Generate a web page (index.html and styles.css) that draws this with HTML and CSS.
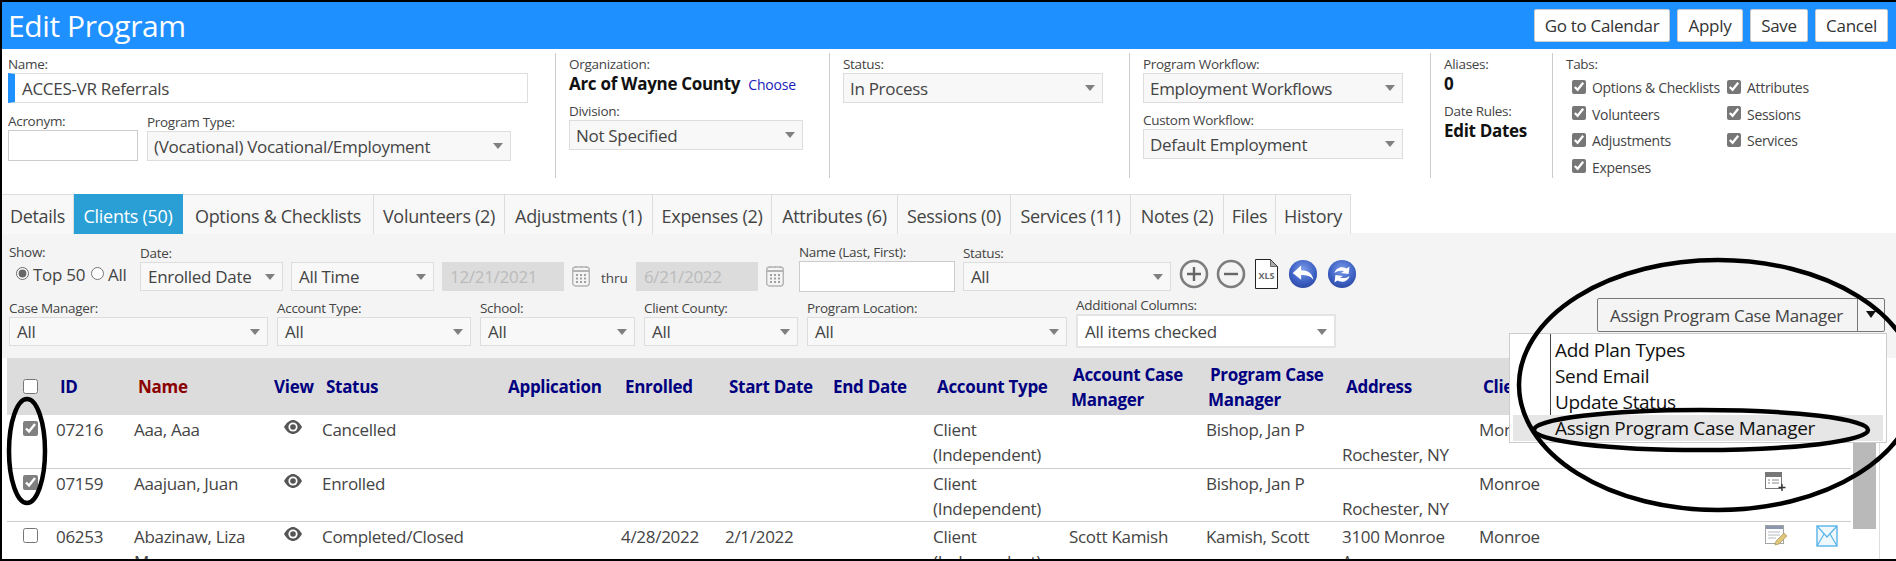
FILE: index.html
```html
<!DOCTYPE html>
<html lang="en">
<head>
    <meta charset="UTF-8">
    <title>Edit Program</title>
    <link rel="stylesheet" href="styles.css">
</head>
<body>
    <svg class="defs" width="0" height="0">
        <symbol id="eye" viewBox="0 0 18 14">
            <path d="M0 7C3 2 6 0 9 0s6 2 9 7c-3 5-6 7-9 7s-6-2-9-7z" fill="#555"/>
            <circle cx="9" cy="7" r="4.6" fill="#fff"/>
            <circle cx="9" cy="7" r="2.8" fill="#555"/>
        </symbol>
        <symbol id="calendar" viewBox="0 0 18 22">
            <rect x="0.7" y="2" width="16.6" height="19" rx="3" fill="#f4f4f4" stroke="#b4b4b4" stroke-width="1.4"/>
            <path d="M1 6h16" stroke="#b4b4b4" stroke-width="2"/>
            <path d="M4 1v2M9 1v2M14 1v2" stroke="#b4b4b4" stroke-width="1.4"/>
            <path d="M4 10h2M8 10h2M12 10h2M4 13.500h2M8 13.500h2M12 13.500h2M4 17h2M8 17h2M12 17h2" stroke="#a0a0a0" stroke-width="2"/>
        </symbol>
    </svg>

    <div class="frame">
        <div class="title-bar">
            <h1>Edit Program</h1>
            <div class="title-buttons">
                <button class="btn-calendar">Go to Calendar</button>
                <button class="btn-apply">Apply</button>
                <button class="btn-save">Save</button>
                <button class="btn-cancel">Cancel</button>
            </div>
        </div>

        <!-- Program fields -->
        <div class="program-form">
            <div class="section sec-name">
                <label>Name:</label>
                <div class="name-input">ACCES-VR Referrals</div>
                <div class="name-row">
                    <div class="acronym">
                        <label>Acronym:</label>
                        <input type="text" class="text-input acronym-input">
                    </div>
                    <div class="program-type">
                        <label>Program Type:</label>
                        <div class="select">(Vocational) Vocational/Employment</div>
                    </div>
                </div>
            </div>
            <div class="section sec-org">
                <label>Organization:</label>
                <div class="strong-value">Arc of Wayne County <a href="#" class="choose">Choose</a></div>
                <label class="second-label">Division:</label>
                <div class="select">Not Specified</div>
            </div>
            <div class="section sec-status">
                <label>Status:</label>
                <div class="select">In Process</div>
            </div>
            <div class="section sec-workflow">
                <label>Program Workflow:</label>
                <div class="select">Employment Workflows</div>
                <label class="custom-label">Custom Workflow:</label>
                <div class="select">Default Employment</div>
            </div>
            <div class="section sec-alias">
                <label>Aliases:</label>
                <div class="strong-value">0</div>
                <label class="second-label">Date Rules:</label>
                <div class="strong-value">Edit Dates</div>
            </div>
            <div class="section sec-tabs">
                <label>Tabs:</label>
                <div class="tab-checks">
                    <label class="check"><input type="checkbox" checked>Options &amp; Checklists</label>
                    <label class="check"><input type="checkbox" checked>Attributes</label>
                    <label class="check"><input type="checkbox" checked>Volunteers</label>
                    <label class="check"><input type="checkbox" checked>Sessions</label>
                    <label class="check"><input type="checkbox" checked>Adjustments</label>
                    <label class="check"><input type="checkbox" checked>Services</label>
                    <label class="check"><input type="checkbox" checked>Expenses</label>
                </div>
            </div>
        </div>

        <div class="tabs">
            <a href="#">Details</a>
            <a href="#" class="active">Clients (50)</a>
            <a href="#">Options &amp; Checklists</a>
            <a href="#">Volunteers (2)</a>
            <a href="#">Adjustments (1)</a>
            <a href="#">Expenses (2)</a>
            <a href="#">Attributes (6)</a>
            <a href="#">Sessions (0)</a>
            <a href="#">Services (11)</a>
            <a href="#">Notes (2)</a>
            <a href="#">Files</a>
            <a href="#">History</a>
        </div>

        <!-- Filters -->
        <div class="filters">
            <div class="filter-row">
                <div class="show-field">
                    <label>Show:</label>
                    <div class="radios">
                        <input type="radio" name="show" checked><span>Top 50</span>
                        <input type="radio" name="show"><span>All</span>
                    </div>
                </div>
                <div class="field w-date"><label>Date:</label><div class="select">Enrolled Date</div></div>
                <div class="field w-date"><label>&nbsp;</label><div class="select">All Time</div></div>
                <div class="date-box first">12/21/2021</div>
                <svg class="cal-icon"><use href="#calendar"></use></svg>
                <span class="thru">thru</span>
                <div class="date-box">6/21/2022</div>
                <svg class="cal-icon"><use href="#calendar"></use></svg>
                <div class="field w-lastname"><label>Name (Last, First):</label><input type="text" class="text-input filter-input"></div>
                <div class="field w-status"><label>Status:</label><div class="select">All</div></div>
                <div class="tool-icons">
                    <svg width="30" height="30" viewBox="0 0 30 30"><circle cx="15" cy="15" r="13" fill="none" stroke="#7d7d7d" stroke-width="2.600"/><path d="M15 8v14M8 15h14" stroke="#666" stroke-width="2.400"/></svg>
                    <svg width="30" height="30" viewBox="0 0 30 30"><circle cx="15" cy="15" r="13" fill="none" stroke="#7d7d7d" stroke-width="2.600"/><path d="M8 15h14" stroke="#666" stroke-width="2.400"/></svg>
                    <svg class="xls" width="23" height="30" viewBox="0 0 23 30">
                        <path d="M.5.5h15l7 7v22H.5z" fill="#fff" stroke="#222"/>
                        <path d="M15.500.5v7h7z" fill="#aaa" stroke="#222" stroke-width=".6"/>
                        <text x="11.500" y="19.500" text-anchor="middle" class="xls-text">XLS</text>
                    </svg>
                    <svg width="32" height="30" viewBox="0 0 32 32">
                        <defs>
                            <radialGradient id="globe" cx=".5" cy=".35" r=".7"><stop offset="0" stop-color="#7d9ce8"/><stop offset=".6" stop-color="#3f63c6"/><stop offset="1" stop-color="#2b45a0"/></radialGradient>
                        </defs>
                        <circle cx="16" cy="16" r="15" fill="url(#globe)"/>
                        <path d="M5 15l9-8v5c7 0 12 3 13 10-3-4-7-5-13-5v5z" fill="#fff"/>
                    </svg>
                    <svg width="32" height="30" viewBox="0 0 32 32">
                        <circle cx="16" cy="16" r="15" fill="url(#globe)"/>
                        <path d="M8 15c1-5 7-8 13-5l3-2-1 8-8-1 3-2c-4-1-7 0-10 2zM24 18c-1 5-7 8-13 5l-3 2 1-8 8 1-3 2c4 1 7 0 10-2z" fill="#fff"/>
                    </svg>
                </div>
            </div>
            <div class="filter-row second">
                <div class="field w-manager"><label>Case Manager:</label><div class="select">All</div></div>
                <div class="field w-account"><label>Account Type:</label><div class="select">All</div></div>
                <div class="field w-school"><label>School:</label><div class="select">All</div></div>
                <div class="field w-county"><label>Client County:</label><div class="select">All</div></div>
                <div class="field w-location"><label>Program Location:</label><div class="select">All</div></div>
                <div class="field w-location columns-field"><label>Additional Columns:</label><div class="select checked-select">All items checked</div></div>

                <div class="action-combo">
                    <div class="action-value">Assign Program Case Manager</div>
                    <div class="action-arrow"></div>
                    <div class="action-menu">
                        <div class="menu-item">Add Plan Types</div>
                        <div class="menu-item">Send Email</div>
                        <div class="menu-item">Update Status</div>
                        <div class="menu-item selected">Assign Program Case Manager</div>
                    </div>
                </div>
            </div>
        </div>

        <!-- Clients table -->
        <div class="grid-wrap">
            <table class="clients">
                <colgroup>
                    <col class="c43"><col class="c78"><col class="c140"><col class="c48"><col class="c186"><col class="c113">
                    <col class="c104"><col class="c104"><col class="c104"><col class="c136"><col class="c137"><col class="c136">
                    <col class="c137"><col class="c137"><col class="c150"><col class="c50"><col class="c41">
                </colgroup>
                <thead>
                    <tr>
                        <th class="cb"><input type="checkbox"></th>
                        <th>ID</th>
                        <th class="sorted">Name</th>
                        <th class="tight">View</th>
                        <th>Status</th>
                        <th class="tight">Application</th>
                        <th>Enrolled</th>
                        <th>Start Date</th>
                        <th>End Date</th>
                        <th>Account Type</th>
                        <th class="two-line">Account Case Manager</th>
                        <th class="two-line">Program Case Manager</th>
                        <th>Address</th>
                        <th>Client County</th>
                        <th></th><th></th><th></th>
                    </tr>
                </thead>
                <tbody>
                    <tr>
                        <td class="cb"><input type="checkbox" checked></td>
                        <td>07216</td>
                        <td>Aaa, Aaa</td>
                        <td class="eye-cell"><svg class="eye"><use href="#eye"></use></svg></td>
                        <td>Cancelled</td>
                        <td></td><td></td><td></td><td></td>
                        <td>Client (Independent)</td>
                        <td></td>
                        <td>Bishop, Jan P</td>
                        <td><br>Rochester, NY</td>
                        <td>Monroe</td>
                        <td></td><td></td><td></td>
                    </tr>
                    <tr>
                        <td class="cb"><input type="checkbox" checked></td>
                        <td>07159</td>
                        <td>Aaajuan, Juan</td>
                        <td class="eye-cell"><svg class="eye"><use href="#eye"></use></svg></td>
                        <td>Enrolled</td>
                        <td></td><td></td><td></td><td></td>
                        <td>Client (Independent)</td>
                        <td></td>
                        <td>Bishop, Jan P</td>
                        <td><br>Rochester, NY</td>
                        <td>Monroe</td>
                        <td></td>
                        <td class="icon-cell">
                            <svg width="22" height="20" viewBox="0 0 22 20">
                                <rect x=".5" y=".5" width="16" height="16" fill="#fff" stroke="#777"/>
                                <path d="M1 3h15" stroke="#777" stroke-width="4"/>
                                <path d="M3 8h2M7 8h7M3 11h2M7 11h7" stroke="#8a8a8a"/>
                                <path d="M17 12v7M13.500 15.500h7" stroke="#333" stroke-width="1.400"/>
                            </svg>
                        </td>
                        <td></td>
                    </tr>
                    <tr>
                        <td class="cb"><input type="checkbox"></td>
                        <td>06253</td>
                        <td>Abazinaw, Liza Mary</td>
                        <td class="eye-cell"><svg class="eye"><use href="#eye"></use></svg></td>
                        <td>Completed/Closed</td>
                        <td></td>
                        <td>4/28/2022</td>
                        <td>2/1/2022</td>
                        <td></td>
                        <td>Client (Independent)</td>
                        <td>Scott Kamish</td>
                        <td>Kamish, Scott</td>
                        <td>3100 Monroe Avenue</td>
                        <td>Monroe</td>
                        <td></td>
                        <td class="icon-cell">
                            <svg width="22" height="22" viewBox="0 0 22 22">
                                <rect x=".5" y=".5" width="18" height="18" fill="#fff" stroke="#a5a5a5"/>
                                <path d="M1 2.500h17" stroke="#8b97ad" stroke-width="3"/>
                                <path d="M3 7h12M3 10h12M3 13h8" stroke="#b5bcc0"/>
                                <path d="M10 20l1-4 8-8 3 3-8 8z" fill="#e0c67a" stroke="#a39560" stroke-width=".7"/>
                            </svg>
                        </td>
                        <td class="icon-cell mail">
                            <svg width="22" height="22" viewBox="0 0 22 22">
                                <rect x="1" y="1" width="20" height="20" fill="#eef8fd" stroke="#5ab4e8" stroke-width="1.400"/>
                                <path d="M1 1l10 11L21 1M1 21l7-12M21 21l-7-12" fill="none" stroke="#5ab4e8" stroke-width="1.200"/>
                            </svg>
                        </td>
                    </tr>
                </tbody>
            </table>
            <div class="scrollbar"><div class="thumb"></div></div>
        </div>

        <!-- Hand-drawn circles from whoever took the screenshot -->
        <svg class="marks" width="1896" height="561" viewBox="0 0 1896 561">
            <ellipse cx="27" cy="451" rx="18" ry="52" />
            <ellipse cx="1718" cy="385" rx="199" ry="125" />
            <ellipse cx="1701" cy="430" rx="167" ry="20" />
        </svg>
    </div>
</body>
</html>
```

FILE: styles.css
```css
* {
    box-sizing: border-box;
}

body {
    margin: 0;
    font-family: "Open Sans", "Noto Sans", sans-serif;
    background: #fff;
    color: #333;
    overflow: hidden;
}

.defs {
    display: block;
    height: 0;
}

.frame {
    height: 561px;
    border-top: 2px solid #000;
    border-left: 2px solid #000;
    border-bottom: 2px solid #000;
    overflow: hidden;
    position: relative;
    background: #fff;
}

label {
    display: block;
    font-size: 13.500px;
    line-height: 17px;
    color: #444;
    letter-spacing: -0.3px;
    white-space: nowrap;
}

/* Title bar */
.title-bar {
    height: 47px;
    background: #1e90ff;
    display: flex;
    align-items: center;
    justify-content: space-between;
    padding: 0 8px 0 6px;
}

.title-bar h1 {
    margin: 0;
    font-size: 30px;
    font-weight: 400;
    color: #fff;
    letter-spacing: -0.4px;
}

.title-buttons {
    display: flex;
    gap: 7px;
}

.title-buttons button {
    height: 33px;
    border: 1px solid #ccc;
    border-radius: 2px;
    background: #fff;
    color: #333;
    font-family: inherit;
    font-size: 17px;
    letter-spacing: -0.3px;
    padding: 0;
}

.btn-calendar { width: 136px; }
.btn-apply { width: 66px; }
.btn-save { width: 58px; }
.btn-cancel { width: 73px; }

/* Program form */
.program-form {
    display: flex;
    height: 145px;
    padding-top: 4px;
}

.section {
    height: 125px;
    border-right: 1px solid #ccc;
    padding: 3px 0 0 13px;
}

.sec-name { width: 554px; padding-left: 6px; }
.sec-org { width: 274px; }
.sec-status { width: 300px; }
.sec-workflow { width: 301px; }
.sec-alias { width: 122px; }
.sec-tabs { border-right: none; flex: 1; }

.select {
    height: 30px;
    background: #f8f8f8;
    border: 1px solid #ddd;
    font-size: 17px;
    line-height: 29px;
    padding-left: 6px;
    color: #444;
    letter-spacing: -0.3px;
    position: relative;
    white-space: nowrap;
    overflow: hidden;
}

.select::after {
    content: "";
    position: absolute;
    top: 11px;
    right: 7px;
    border-left: 5px solid transparent;
    border-right: 5px solid transparent;
    border-top: 6px solid #808080;
}

.text-input {
    display: block;
    border: 1px solid #ccc;
    background: #fff;
    outline: none;
}

.name-input {
    width: 520px;
    height: 30px;
    border: 1px solid #ddd;
    border-left: 7px solid #1e90ff;
    font-size: 17px;
    line-height: 29px;
    padding-left: 7px;
    color: #444;
    letter-spacing: -0.3px;
}

.name-row {
    display: flex;
    margin-top: 10px;
    gap: 9px;
}

.acronym-input {
    width: 130px;
    height: 31px;
}

.program-type {
    width: 364px;
    padding-top: 1px;
}

.sec-org .select { width: 234px; }
.sec-status .select { width: 260px; }
.sec-workflow .select { width: 260px; }

.strong-value {
    height: 22px;
    font-size: 17px;
    font-weight: 700;
    line-height: 22px;
    color: #111;
    letter-spacing: -0.3px;
    white-space: nowrap;
}

.choose {
    font-size: 14px;
    font-weight: 400;
    color: #1a1ab8;
    text-decoration: none;
    margin-left: 4px;
    letter-spacing: -0.2px;
}

.second-label {
    margin-top: 8px;
}

.custom-label {
    margin-top: 9px;
}

.tab-checks {
    display: grid;
    grid-template-columns: 155px auto;
    grid-auto-rows: 26.500px;
    margin: 2px 0 0 6px;
}

.check {
    display: flex;
    align-items: center;
    font-size: 14px;
    line-height: 20px;
}

.check input {
    width: 14px;
    height: 14px;
    margin: 0 6px 3px 0;
    accent-color: #777;
}

/* Tabs */
.tabs {
    display: grid;
    grid-template-columns: 72px 109px 191px 131px 148px 119px 126px 113px 120px 93px 52px 75px;
    height: 39px;
    padding-bottom: 2px;
    width: max-content;
}

.tabs a {
    background: #f8f8f8;
    border-top: 1px solid #ddd;
    border-right: 1px solid #ddd;
    color: #444;
    font-size: 18px;
    line-height: 36px;
    padding-top: 3px;
    text-align: center;
    text-decoration: none;
    letter-spacing: -0.3px;
    white-space: nowrap;
}

.tabs a.active {
    background: #2a9fd6;
    color: #fff;
    border-color: #2a9fd6;
}

/* Filters */
.filters {
    height: 125px;
    background: #f4f4f4;
    padding: 12px 0 0 7px;
}

.filter-row {
    display: flex;
    height: 47px;
    align-items: flex-start;
    gap: 8px;
}

.filter-row.second {
    margin-top: 8px;
    gap: 9px;
}

.filter-row .select {
    height: 29px;
    line-height: 28px;
    padding-left: 7px;
}

.show-field {
    width: 123px;
    margin-top: -1px;
}

.radios {
    display: flex;
    align-items: center;
    font-size: 17px;
    letter-spacing: -0.3px;
    color: #444;
    margin-top: 2px;
    padding-left: 7px;
    white-space: nowrap;
}

.radios input {
    width: 15px;
    height: 15px;
    margin: 0 4px 3px 0;
    accent-color: #666;
}

.radios span {
    margin-right: 6px;
}

.w-date { width: 143px; }
.w-lastname { width: 156px; margin-top: -1px; margin-left: 7px; }
.w-status { width: 208px; }
.w-manager { width: 259px; }
.w-account { width: 194px; }
.w-school { width: 155px; }
.w-county { width: 154px; }
.w-location { width: 260px; }

.field label {
    height: 17px;
}

.filter-input {
    width: 156px;
    height: 31px;
}

.date-box {
    width: 122px;
    height: 29px;
    margin-top: 17px;
    background: #dcdcdc;
    color: #bbb;
    font-size: 17px;
    line-height: 29px;
    padding-left: 8px;
    letter-spacing: -0.3px;
    white-space: nowrap;
}

.cal-icon {
    width: 18px;
    height: 22px;
    margin-top: 20px;
}

.thru {
    font-size: 13.500px;
    margin-top: 24px;
    margin-left: 3px;
    margin-right: 0;
    color: #444;
}

.tool-icons {
    display: flex;
    align-items: center;
    gap: 7px;
    margin-top: 14px;
}

.tool-icons .xls {
    margin: 0 2px 0 2px;
}

.xls-text {
    font-family: "Open Sans", sans-serif;
    font-size: 9px;
    font-weight: 700;
    fill: #666;
}

.columns-field {
    margin-top: -3px;
}

.filter-row .checked-select {
    height: 34px;
    line-height: 32px;
    background: #fff;
    border: 2px solid #e4e4e4;
}

.checked-select::after {
    top: 13px;
}

/* Action dropdown */
.action-combo {
    position: relative;
    display: flex;
    width: 288px;
    height: 34px;
    margin: -2px 11px 0 auto;
    border: 1px solid #777;
    border-radius: 2px;
    background: #f4f4f4;
}

.action-value {
    flex: 1;
    font-size: 17px;
    line-height: 34px;
    padding-left: 12px;
    color: #444;
    letter-spacing: -0.3px;
    white-space: nowrap;
}

.action-arrow {
    width: 27px;
    border-left: 1px solid #777;
    position: relative;
}

.action-arrow::after {
    content: "";
    position: absolute;
    top: 12px;
    left: 8px;
    border-left: 5px solid transparent;
    border-right: 5px solid transparent;
    border-top: 7px solid #111;
}

.action-menu {
    position: absolute;
    top: 34px;
    right: -3px;
    width: 378px;
    height: 110px;
    background: #fff;
    border: 1px solid #ccc;
    padding: 3px;
    z-index: 5;
}

.action-menu::before {
    content: "";
    position: absolute;
    left: 40px;
    top: 0;
    height: 81px;
    border-left: 1px solid #444;
}

.menu-item {
    height: 26px;
    padding-left: 42px;
    font-size: 19px;
    line-height: 26px;
    color: #111;
    letter-spacing: -0.35px;
    white-space: nowrap;
}

.menu-item.selected {
    background: #e6e6e6;
}

/* Clients table */
.grid-wrap {
    display: flex;
    margin-left: 5px;
    height: 203px;
}

.clients {
    width: 1844px;
    flex: none;
    table-layout: fixed;
    border-collapse: collapse;
    align-self: flex-start;
}

.c41 { width: 41px; }
.c43 { width: 43px; }
.c48 { width: 48px; }
.c50 { width: 50px; }
.c78 { width: 78px; }
.c104 { width: 104px; }
.c113 { width: 113px; }
.c136 { width: 136px; }
.c137 { width: 137px; }
.c140 { width: 140px; }
.c150 { width: 150px; }
.c186 { width: 186px; }

.clients th {
    height: 57px;
    background: #dcdcdc;
    color: #000080;
    font-size: 17px;
    font-weight: 700;
    line-height: 25px;
    text-align: left;
    padding: 0 0 0 10px;
    letter-spacing: -0.3px;
    overflow: hidden;
    white-space: nowrap;
}

.clients th.sorted {
    color: #8b0000;
}

.clients th.tight {
    padding-left: 6px;
}

.clients th.two-line {
    white-space: normal;
    padding: 0 0 0 8px;
    text-indent: 2px;
}

.clients td {
    height: 53px;
    border-bottom: 1px solid #ccc;
    font-size: 17px;
    line-height: 25px;
    color: #444;
    vertical-align: top;
    padding: 2px 4px 0 6px;
    letter-spacing: -0.3px;
    background: #fff;
}

.clients .cb {
    padding: 0 0 0 16px;
}

.clients th.cb {
    vertical-align: middle;
}

.clients td.cb {
    padding-top: 6px;
}

.clients input[type="checkbox"] {
    display: block;
    width: 15px;
    height: 15px;
    margin: 0;
    accent-color: #808080;
}

.clients td.eye-cell {
    padding: 5px 0 0 16px;
}

.eye {
    display: block;
    width: 18px;
    height: 14px;
}

.clients td.icon-cell {
    padding: 3px 0 0 5px;
}

.clients td.mail {
    padding-left: 6px;
}

.icon-cell svg {
    display: block;
}

.scrollbar {
    width: 27px;
    margin-left: 2px;
    border-right: 1px solid #ddd;
    flex: none;
}

.thumb {
    width: 23px;
    height: 171px;
    background: #b9b9b9;
}

/* Annotation marks */
.marks {
    position: absolute;
    top: -2px;
    left: -2px;
    pointer-events: none;
    z-index: 10;
}

.marks ellipse {
    fill: none;
    stroke: #000;
    stroke-width: 4.500;
}
```
